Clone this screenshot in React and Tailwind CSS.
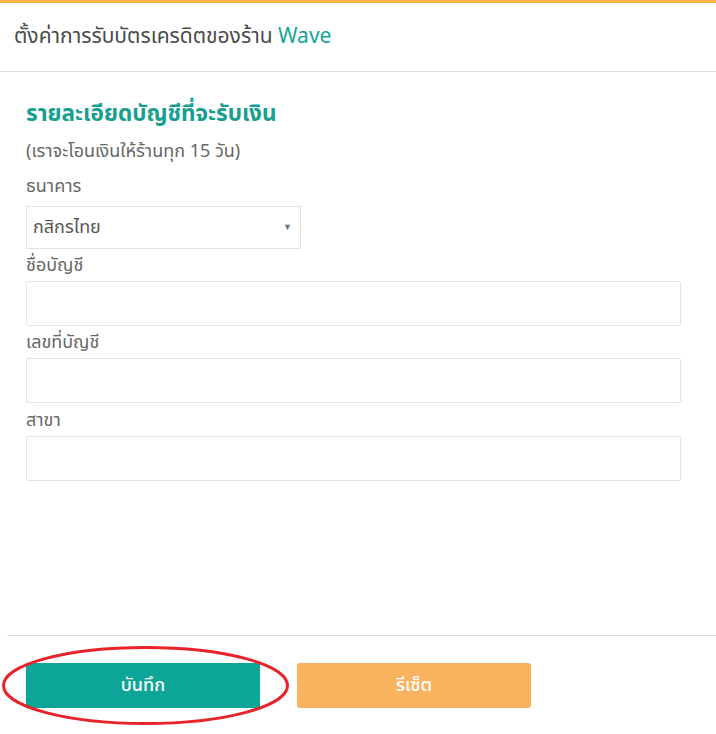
export default function App() {
  const font = { fontFamily: '"Noto Sans Thai", "Noto Sans", "Liberation Sans", sans-serif' };
  return (
    <div className="relative w-[716px] h-[734px] bg-white overflow-hidden" style={font}>
      <div className="h-[3px] bg-[#fbb445]" />
      <div className="h-[69px] flex items-center px-[14px] border-b border-[#dcdcdc]">
        <div className="text-[21px] text-[#4a4a4a] leading-[28px]">
          ตั้งค่าการรับบัตรเครดิตของร้าน <span className="text-[#14a596]">Wave</span>
        </div>
      </div>
      <div className="pl-[26px] pr-[35px] pt-[27px] h-[563px]">
        <div className="text-[22.5px] font-bold text-[#16a08f] leading-[30px]">รายละเอียดบัญชีที่จะรับเงิน</div>
        <div className="mt-[12px] text-[18px] text-[#666] leading-[22px]">(เราจะโอนเงินให้ร้านทุก 15 วัน)</div>
        <div className="mt-[13px] text-[18px] text-[#666] leading-[22px]">ธนาคาร</div>
        <div className="mt-[8px] w-[275px] h-[43px] border border-[#e3e3e3] flex items-center justify-between pl-[6px] pr-[8px]">
          <span className="text-[18px] text-[#555]">กสิกรไทย</span>
          <span className="text-[9px] text-[#6b7280]">▼</span>
        </div>
        <div className="mt-[2px] text-[18px] text-[#666] leading-[30px]">ชื่อบัญชี</div>
        <div className="h-[45px] border border-[#e3e3e3] rounded-[2px]" />
        <div className="mt-[2px] text-[18px] text-[#666] leading-[30px]">เลขที่บัญชี</div>
        <div className="h-[45px] border border-[#e3e3e3] rounded-[2px]" />
        <div className="mt-[3px] text-[18px] text-[#666] leading-[30px]">สาขา</div>
        <div className="h-[45px] border border-[#e3e3e3] rounded-[2px]" />
      </div>
      <div className="ml-[7px] border-t border-[#dedede]" />
      <div className="flex gap-[37px] pl-[26px] pt-[27px]">
        <button className="w-[234px] h-[45px] bg-[#0ca597] text-white text-[18px] font-medium">บันทึก</button>
        <button className="w-[234px] h-[45px] bg-[#f9b25e] text-white text-[18px] font-medium rounded-[3px]">รีเซ็ต</button>
      </div>
      <svg className="absolute left-0 top-0 pointer-events-none" width="716" height="734">
        <ellipse cx="145.5" cy="685.5" rx="142" ry="38" fill="none" stroke="#e8242a" strokeWidth="3" />
      </svg>
    </div>
  );
}
